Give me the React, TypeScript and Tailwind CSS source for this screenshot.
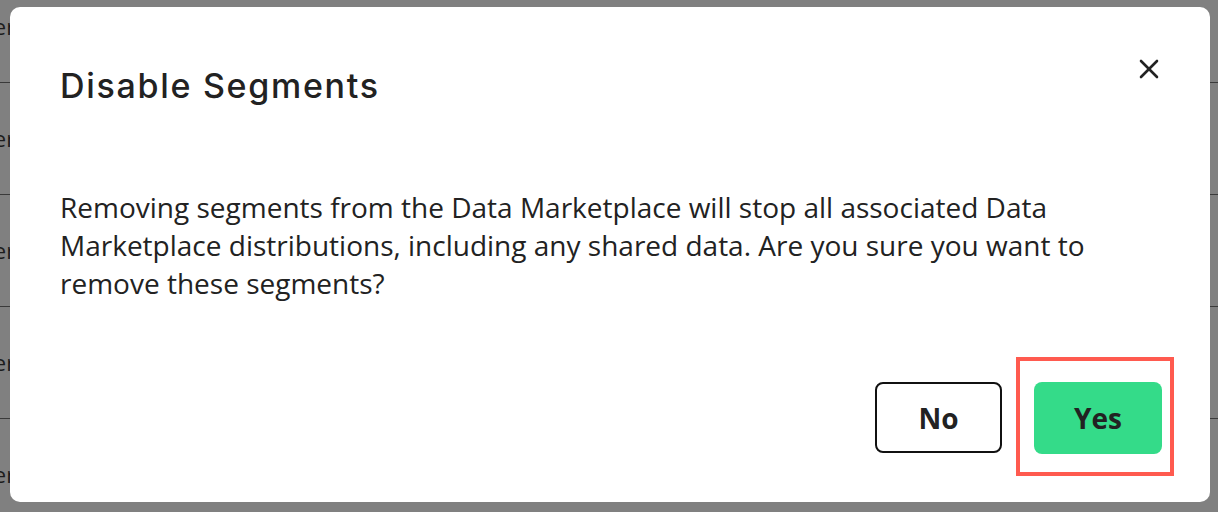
const rows = [0, 1, 2, 3, 4];

function CloseIcon() {
  return (
    <svg width="20" height="20" viewBox="0 0 20 20" fill="none" stroke="#222222" strokeWidth="2.6" strokeLinecap="round">
      <line x1="2" y1="2" x2="18" y2="18" />
      <line x1="18" y1="2" x2="2" y2="18" />
    </svg>
  );
}

export default function App() {
  return (
    <div className="relative w-[1218px] h-[512px] overflow-hidden bg-[#808080]" style={{ fontFamily: '"Open Sans", sans-serif' }}>
      {/* page behind the overlay */}
      <div className="flex flex-col -mt-[29px]">
        {rows.map((r) => (
          <div key={r} className="flex h-[112px] shrink-0 items-center justify-between border-b border-[#3a3a3a] text-[22px] text-[#1c1c1c]">
            <span className="-ml-[62px]">Partner</span>
            <span className="-mr-[40px]">{r === 0 || r === 3 ? 'con' : 'nco'}</span>
          </div>
        ))}
      </div>

      {/* modal */}
      <div className="absolute left-[10px] top-[7px] w-[1200px] h-[495px] rounded-[10px] bg-white flex flex-col pt-[48px] pl-[50px] pr-[48px] pb-[48px]">
        <div className="flex items-start justify-between">
          <h2 className="mt-[11px] text-[34px] leading-[40px] font-medium tracking-[0.05em] text-[#222222]" style={{ fontFamily: 'Inter, sans-serif' }}>
            Disable Segments
          </h2>
          <button className="mt-[4px] mr-[3px]">
            <CloseIcon />
          </button>
        </div>
        <p className="mt-[82px] text-[28px] leading-[38px] text-[#222222] pr-[40px]">
          Removing segments from the Data Marketplace will stop all associated Data Marketplace distributions, including any shared data. Are you sure you want to remove these segments?
        </p>
        <div className="mt-auto flex justify-end gap-[32px]">
          <button className="w-[127px] h-[71px] rounded-[8px] border-2 border-[#111111] bg-white text-[28px] font-bold text-[#222222]">
            No
          </button>
          <div className="relative">
            <button className="w-[128px] h-[72px] rounded-[8px] bg-[#34db89] text-[28px] font-bold text-[#222222]">
              Yes
            </button>
            <div className="absolute -left-[18px] -top-[25px] -right-[12px] -bottom-[22px] border-[4px] border-[#ff5a4f] pointer-events-none" />
          </div>
        </div>
      </div>
    </div>
  );
}
